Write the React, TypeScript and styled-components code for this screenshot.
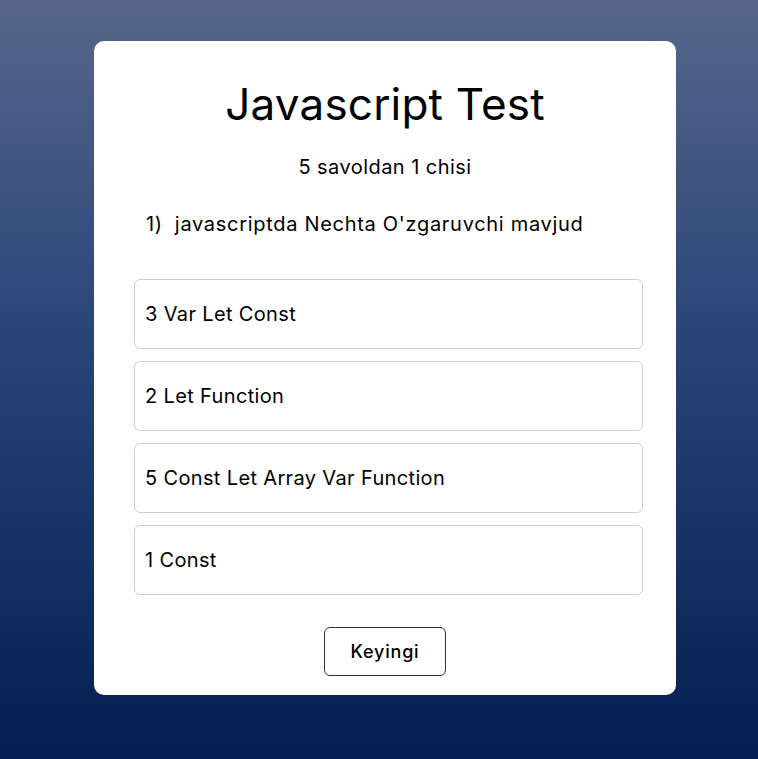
import React from "react";
import styled, { createGlobalStyle } from "styled-components";

const GlobalStyle = createGlobalStyle`
  * { box-sizing: border-box; }
  body {
    margin: 0;
    font-family: "Inter", "Noto Sans", sans-serif;
    color: #000;
  }
`;

const Page = styled.div`
  min-height: 759px;
  padding: 41px 0 0 12px;
  background: linear-gradient(to bottom, #56668a 0%, #2a4478 45%, #041e4f 100%);
  display: flex;
  justify-content: center;
  align-items: flex-start;
`;

const Card = styled.div`
  width: 582px;
  background: #fff;
  border-radius: 10px;
  padding: 37px 33px 19px 40px;
  display: flex;
  flex-direction: column;
`;

const Title = styled.h1`
  margin: 0;
  font-size: 44px;
  line-height: 52px;
  font-weight: 400;
  letter-spacing: 0.2px;
  text-align: center;
  padding-right: 7px;
`;

const Counter = styled.p`
  margin: 23px 0 0;
  font-size: 20px;
  line-height: 28px;
  letter-spacing: 0.45px;
  text-align: center;
  padding-right: 7px;
`;

const Question = styled.div`
  margin-top: 29px;
  padding-left: 12px;
  display: flex;
  gap: 12px;
  font-size: 20px;
  line-height: 28px;
  letter-spacing: 0.7px;
`;

const Options = styled.div`
  margin-top: 41px;
  display: flex;
  flex-direction: column;
  gap: 12px;
`;

const Option = styled.div`
  height: 70px;
  border: 1px solid #cfcfcf;
  border-radius: 6px;
  padding: 0 10px;
  display: flex;
  align-items: center;
  font-size: 20px;
  letter-spacing: 0.35px;
  cursor: pointer;
`;

const Footer = styled.div`
  margin-top: 32px;
  display: flex;
  justify-content: center;
  padding-right: 7px;
`;

const NextButton = styled.button`
  width: 122px;
  height: 49px;
  border: 1px solid #333;
  border-radius: 6px;
  background: #fff;
  font-family: inherit;
  font-size: 18px;
  font-weight: 500;
  letter-spacing: 0.8px;
  color: #000;
  cursor: pointer;
`;

const answers = [
  "3 Var Let Const",
  "2 Let Function",
  "5 Const Let Array Var Function",
  "1 Const",
];

const App: React.FC = () => (
  <Page>
    <GlobalStyle />
    <Card>
      <Title>Javascript Test</Title>
      <Counter>5 savoldan 1 chisi</Counter>
      <Question>
        <span>1)</span>
        <span>javascriptda Nechta O'zgaruvchi mavjud</span>
      </Question>
      <Options>
        {answers.map((a, i) => (
          <Option key={i}>{a}</Option>
        ))}
      </Options>
      <Footer>
        <NextButton>Keyingi</NextButton>
      </Footer>
    </Card>
  </Page>
);

export default App;
